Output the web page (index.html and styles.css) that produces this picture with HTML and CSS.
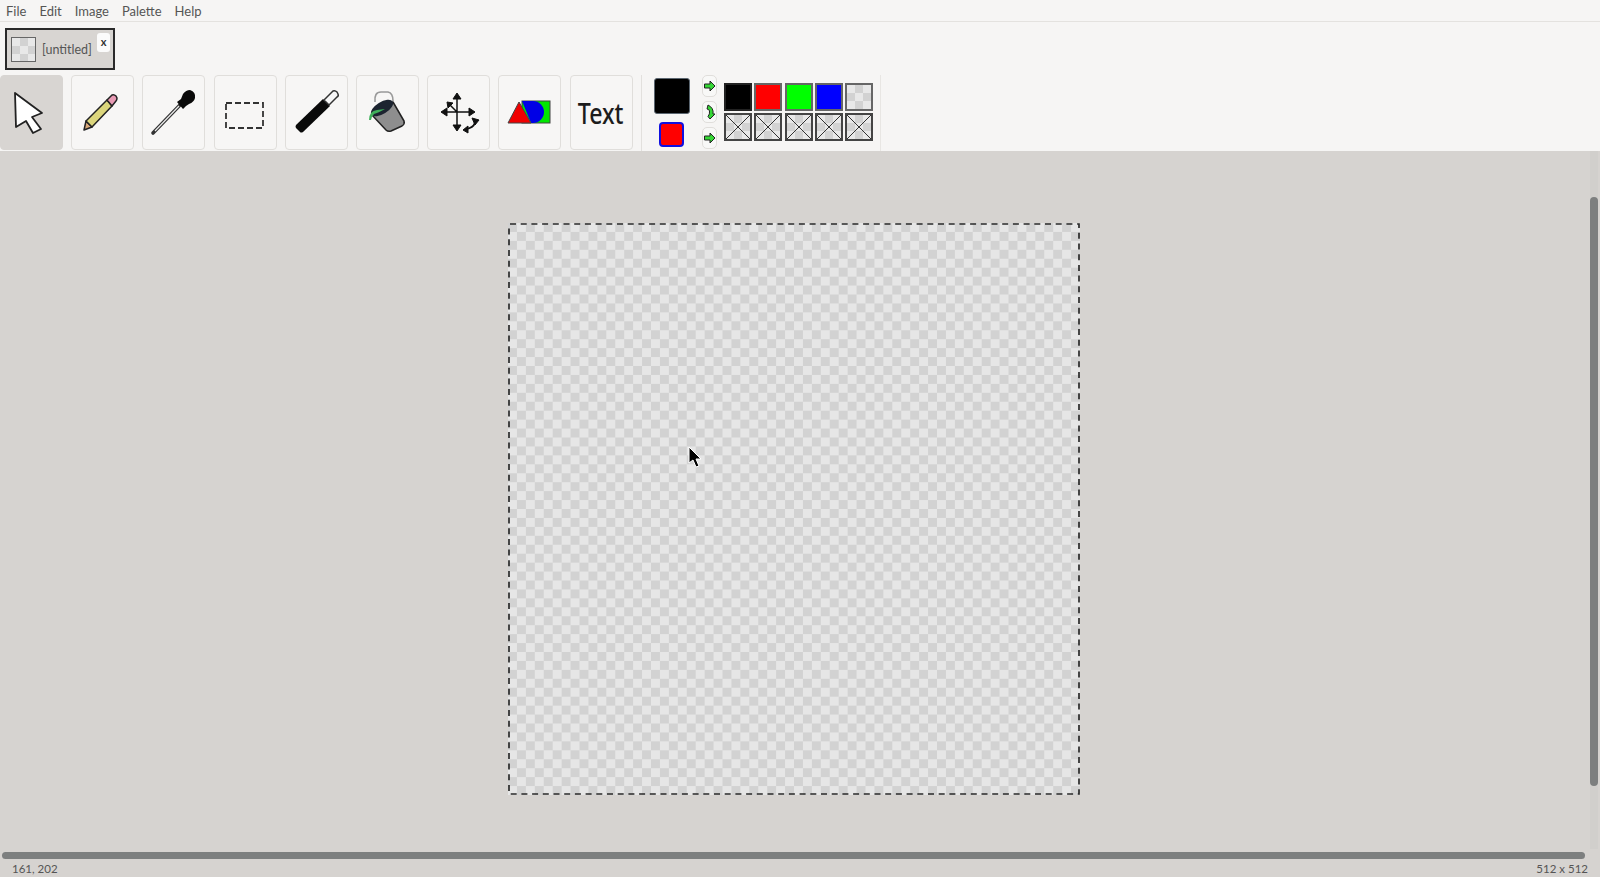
FILE: index.html
```html
<!DOCTYPE html>
<html lang="en">
  <head>
    <meta charset="utf-8">
    <title>Paint</title>
    <link rel="stylesheet" href="styles.css">
  </head>
  <body>
    <div class="menubar">
      <span>File</span>
      <span>Edit</span>
      <span>Image</span>
      <span>Palette</span>
      <span>Help</span>
    </div>
    <div class="tabbar">
      <div class="tab">
        <div class="tab-thumb"></div>
        <span class="tab-name">[untitled]</span>
        <span class="tab-close">x</span>
      </div>
    </div>
    <div class="toolbar">
      <div class="tools">
        <div class="tool active">
          <svg viewBox="0 0 63 74"><path d="M15 18 L42 38 L32 42 L41 54 L33 58 L26 46 L16 52 Z" fill="#fff" stroke="#222" stroke-width="1.8" stroke-linejoin="round"/></svg>
        </div>
        <div class="tool">
          <svg viewBox="0 0 63 74">
            <path d="M13 55 L15 46 L21 52 Z" fill="#d8a878" stroke="#222" stroke-width="1.5" stroke-linejoin="round"/>
            <path d="M15 46 L36 25 L41 31 L21 52 Z" fill="#dcd67c" stroke="#222" stroke-width="1.5" stroke-linejoin="round"/>
            <path d="M36 25 L41 20 Q43 19 45 21 L46 23 Q46 25 45 26 L41 31 Z" fill="#e89ab4" stroke="#222" stroke-width="1.5" stroke-linejoin="round"/>
          </svg>
        </div>
        <div class="tool">
          <svg viewBox="0 0 63 74">
            <path d="M11 58 L38 30" stroke="#333" stroke-width="3.6" stroke-linecap="round"/>
            <path d="M13 56 L37 31" stroke="#eee" stroke-width="1.2"/>
            <path d="M35 27 L39 24 L41 19 Q44 15 48 15 Q54 17 53 23 Q52 27 47 29 L44 31 L41 34 Z" fill="#0a0a0a"/>
          </svg>
        </div>
        <div class="tool">
          <svg viewBox="0 0 63 74"><rect x="12" y="28" width="37" height="25" fill="none" stroke="#333" stroke-width="1.8" stroke-dasharray="6 3"/></svg>
        </div>
        <div class="tool">
          <svg viewBox="0 0 63 74">
            <path d="M11 50 L38 24 L45 31 L18 57 Q16 58 15 57 L11 53 Q10 52 11 50 Z" fill="#0a0a0a"/>
            <path d="M39 25 L48 16 Q50 15 52 17 L53 19 Q54 21 52 22 L44 30 Z" fill="#f6f6f6" stroke="#333" stroke-width="1.5" stroke-linejoin="round"/>
          </svg>
        </div>
        <div class="tool">
          <svg viewBox="0 0 63 74">
            <path d="M19 27 Q18 17 25 17 L32 17 Q37 18 37 26" fill="none" stroke="#999" stroke-width="1.6"/>
            <path d="M16 40 L37 27 L48 46 Q49 49 46 51 L35 56 Q32 57 30 55 Z" fill="#8e8e8e" stroke="#222" stroke-width="1.5" stroke-linejoin="round"/>
            <ellipse cx="26" cy="33" rx="12.5" ry="6" transform="rotate(-32 26 33)" fill="#1c2430"/>
            <path d="M13 45 Q13 36 21 35 L29 34 Q22 38 18 39 Q16 41 15 45 Z" fill="#3fb05a"/>
          </svg>
        </div>
        <div class="tool">
          <svg viewBox="0 0 63 74">
            <path d="M30 20 V54 M16 37 H46 M30 37 L22 29" stroke="#111" stroke-width="1.5" fill="none"/>
            <path d="M30 18 L34 24 H26 Z M30 56 L26 50 H34 Z M14 37 L20 33 V41 Z M48 37 L42 33 V41 Z M20 27 L26 28 L21 33 Z" fill="#111" stroke="#111" stroke-linejoin="round"/>
            <path d="M39 54 Q46 53 48 48" stroke="#111" stroke-width="2" fill="none"/>
            <path d="M52 45 L45 43 L48 50 Z M36 55 L41 51 L41 58 Z" fill="#111" stroke="#111" stroke-linejoin="round"/>
          </svg>
        </div>
        <div class="tool">
          <svg viewBox="0 0 63 74">
            <rect x="24" y="26" width="28" height="22" fill="#00e800" stroke="#444" stroke-width="1"/>
            <path d="M24 26 H35 A11 11 0 1 1 35 48 H33 Z" fill="#0000e6"/>
            <path d="M10 48 L21 27 L33 48 Z" fill="#f00000" stroke="#444" stroke-width="1"/>
          </svg>
        </div>
        <div class="tool tool-text"><span>Text</span></div>
      </div>
      <div class="colors">
        <div class="current">
          <div class="fg"></div>
          <div class="bg"></div>
        </div>
        <div class="swaps">
          <div class="swap">
            <svg viewBox="0 0 15 22"><path d="M2.5 9 H8 V6 L13 11 L8 16 V13 H2.5 Z" fill="#35d835" stroke="#222" stroke-width="1"/></svg>
          </div>
          <div class="swap">
            <svg viewBox="0 0 15 22"><path d="M6 4 Q12 7 11 13 L13 13 L8 18 L6 15.5 Q8 13 7.5 10 Q7 8 5 8 Z" fill="#35d835" stroke="#222" stroke-width="1"/></svg>
          </div>
          <div class="swap">
            <svg viewBox="0 0 15 22"><path d="M2.5 9 H8 V6 L13 11 L8 16 V13 H2.5 Z" fill="#35d835" stroke="#222" stroke-width="1"/></svg>
          </div>
        </div>
        <div class="palette">
          <div class="cell black"></div>
          <div class="cell red"></div>
          <div class="cell green"></div>
          <div class="cell blue"></div>
          <div class="cell clear"></div>
          <div class="cell empty"></div>
          <div class="cell empty"></div>
          <div class="cell empty"></div>
          <div class="cell empty"></div>
          <div class="cell empty"></div>
        </div>
      </div>
    </div>
    <div class="main">
      <div class="workspace">
        <div class="canvas">
          <svg class="marquee" width="572" height="572"><rect x="1" y="1" width="570" height="570" fill="none" stroke="#2a2a2a" stroke-width="1.7" stroke-dasharray="6 4.7" stroke-dashoffset="-1"/></svg>
          <svg class="pointer" width="16" height="24" viewBox="0 0 16 24"><path d="M1 0 L1 16 L5 13 L8 20 L11 19 L8 12 L13 12 Z" fill="#000" stroke="#fff" stroke-width="1"/></svg>
        </div>
      </div>
      <div class="vtrack"><div class="vthumb"></div></div>
      <div class="htrack"><div class="hthumb"></div></div>
    </div>
    <div class="statusbar">
      <span>161, 202</span>
      <span>512 x 512</span>
    </div>
  </body>
</html>
```

FILE: styles.css
```css
html, body {
  margin: 0;
  padding: 0;
  height: 100%;
  overflow: hidden;
}
body {
  display: flex;
  flex-direction: column;
  background: #d6d3d0;
  font-family: Lato, "Noto Sans", sans-serif;
  color: #555;
}
.menubar {
  display: flex;
  gap: 13px;
  height: 22px;
  padding-left: 6px;
  box-sizing: border-box;
  align-items: center;
  background: #f6f5f4;
  border-bottom: 1px solid #e4e2df;
  font-size: 13px;
}
.tabbar {
  height: 53px;
  padding: 6px 0 0 5px;
  box-sizing: border-box;
  background: #f6f5f4;
}
.tab {
  display: flex;
  align-items: center;
  position: relative;
  width: 110px;
  height: 42px;
  box-sizing: border-box;
  padding-left: 4px;
  background: #d8d5d2;
  border: 2px solid #2a2a2a;
  font-size: 12.5px;
}
.tab-thumb {
  width: 25px;
  height: 25px;
  box-sizing: border-box;
  border: 1px solid #666;
  background: repeating-conic-gradient(#d2d2d2 0 25%, #e8e8e8 0 50%) 0 0 / 16px 16px;
}
.tab-name {
  margin-left: 6px;
}
.tab-close {
  position: absolute;
  top: 3px;
  right: 3px;
  width: 13px;
  height: 19px;
  background: #fbfbfb;
  border-radius: 3px;
  text-align: center;
  line-height: 17px;
  font-weight: 700;
  font-size: 11px;
  color: #333;
}
.toolbar {
  display: flex;
  height: 76px;
  background: #f6f5f4;
}
.tools {
  display: flex;
  gap: 8.2px;
  width: 642px;
  box-sizing: border-box;
  border-right: 1px solid #e2e0dd;
}
.tool {
  width: 63px;
  height: 75px;
  box-sizing: border-box;
  border: 1px solid #e0dedb;
  border-radius: 4px;
  background: #f7f6f5;
}
.tool svg {
  display: block;
  width: 63px;
  height: 74px;
  margin: -1px;
}
.tool.active {
  background: #d8d5d2;
  border-color: #d8d5d2;
}
.tool-text {
  display: flex;
  align-items: center;
  justify-content: center;
  font-family: "Noto Sans", sans-serif;
  font-size: 28px;
  font-weight: 500;
  color: #1c1c1c;
}
.tool-text span {
  transform: scaleX(0.83);
}
.colors {
  display: flex;
  width: 239px;
  box-sizing: border-box;
  border-right: 1px solid #e8e6e3;
}
.current {
  width: 36px;
  margin: 3px 0 0 12px;
}
.fg {
  width: 36px;
  height: 36px;
  box-sizing: border-box;
  background: #000;
  border: 1px solid #5b6670;
  border-radius: 3px;
}
.bg {
  width: 25px;
  height: 25px;
  margin: 8px 0 0 5px;
  box-sizing: border-box;
  background: #f00;
  border: 2px solid #1010e0;
  border-radius: 4px;
}
.swaps {
  display: flex;
  flex-direction: column;
  gap: 4px;
  margin-left: 12px;
}
.swap {
  width: 15px;
  height: 22px;
  box-sizing: border-box;
  border: 1px solid #e0dedb;
  border-radius: 5px;
  background: #f8f8f7;
}
.swap svg {
  display: block;
  width: 15px;
  height: 22px;
  margin: -1px;
}
.palette {
  display: grid;
  grid-template-columns: repeat(5, 28px);
  grid-template-rows: repeat(2, 28px);
  gap: 2px 2.3px;
  margin: 8px 0 0 7px;
}
.cell {
  box-sizing: border-box;
  border: 2px solid #666;
}
.black { background: #000; border-color: #222; }
.red { background: #f00; }
.green { background: #0f0; }
.blue { background: #00f; }
.clear {
  background: repeating-conic-gradient(#d2d2d2 0 25%, #e8e8e8 0 50%) 0 0 / 16px 16px;
}
.empty {
  border-color: #444;
  background:
    linear-gradient(45deg, transparent calc(50% - 0.7px), #333 calc(50% - 0.7px), #333 calc(50% + 0.7px), transparent calc(50% + 0.7px)),
    linear-gradient(-45deg, transparent calc(50% - 0.7px), #333 calc(50% - 0.7px), #333 calc(50% + 0.7px), transparent calc(50% + 0.7px)),
    repeating-conic-gradient(#d2d2d2 0 25%, #e8e8e8 0 50%) 0 0 / 16px 16px;
}
.main {
  flex: 1;
  display: grid;
  grid-template-columns: 1fr 12px;
  grid-template-rows: 1fr 10px;
  min-height: 0;
}
.workspace {
  display: flex;
  justify-content: center;
  padding-top: 72px;
}
.canvas {
  position: relative;
  width: 572px;
  height: 572px;
  background: repeating-conic-gradient(#e6e6e6 0 25%, #d2d2d2 0 50%) 0 0 / 17.875px 17.875px;
}
.marquee {
  position: absolute;
  top: 0;
  left: 0;
}
.pointer {
  position: absolute;
  left: 180px;
  top: 224px;
}
.vtrack {
  padding: 46px 2px 0;
  background: linear-gradient(#d1cfcc, #d1cfcc) 2px 0 / 8px 100% no-repeat;
}
.vthumb {
  height: 589px;
  background: #7d7f7f;
  border-radius: 4px;
}
.htrack {
  grid-column: 1 / -1;
  padding: 3px 15px 0 2px;
}
.hthumb {
  height: 7px;
  background: #7d7f7f;
  border-radius: 4px;
}
.statusbar {
  display: flex;
  justify-content: space-between;
  height: 18px;
  padding: 0 12px;
  box-sizing: border-box;
  align-items: center;
  font-size: 11.5px;
}
```
